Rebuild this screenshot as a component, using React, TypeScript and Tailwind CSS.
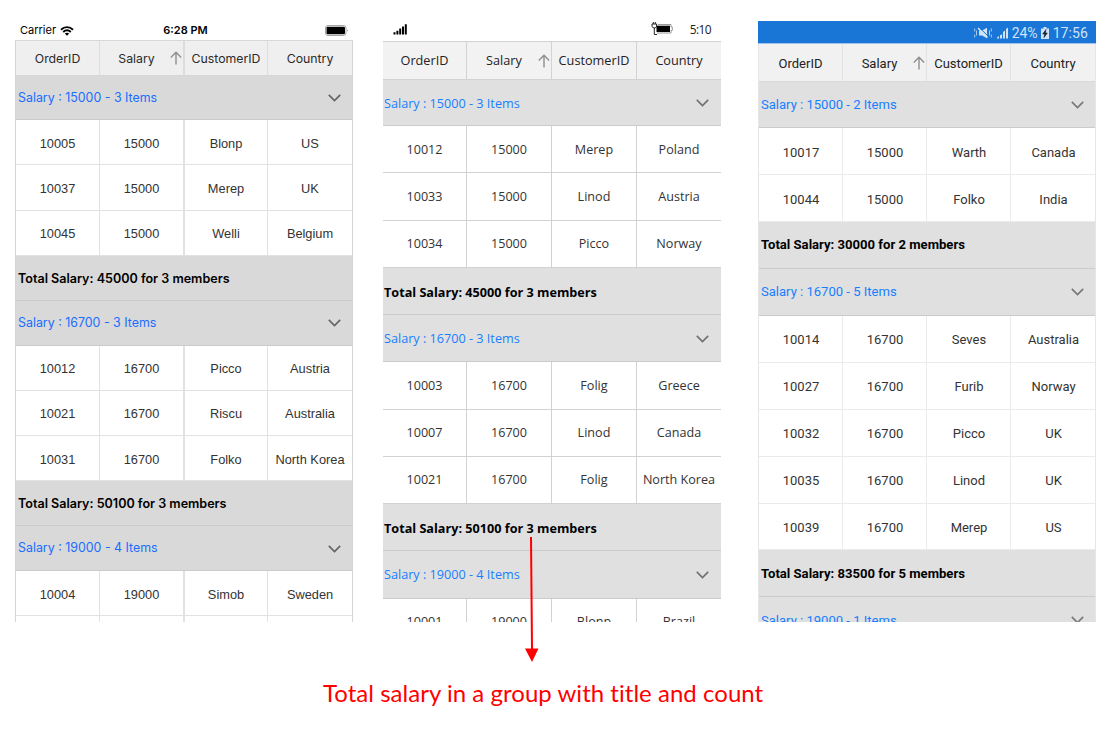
type Row =
  | { kind: 'group'; text: string }
  | { kind: 'total'; text: string }
  | { kind: 'data'; cells: string[] };

const group = (salary: number, count: number): Row => ({ kind: 'group', text: `Salary : ${salary} - ${count} Items` });
const total = (sum: number, count: number): Row => ({ kind: 'total', text: `Total Salary: ${sum} for ${count} members` });
const data = (...cells: string[]): Row => ({ kind: 'data', cells });

type Theme = {
  grid: string;
  cols: string;
  header: string;
  headerLine: string;
  group: string;
  firstRow: string;
  total: string;
  row: string;
  cell: string;
  line: string;
  wideLine: number[];
  chevron: string;
};

const ios: Theme = {
  grid: 'border-x border-[#d5d5d5]',
  cols: 'grid-cols-[84px_85px_83px_84px]',
  header: 'h-[36px] bg-[#efefef] border-y border-[#d8d8d8] font-[Inter,sans-serif] text-[12.3px] text-[#2b2b2b] *:pt-[2px]',
  headerLine: 'border-[#dcdcdc]',
  group: 'bg-[#d9d9d9] font-[Inter,sans-serif] text-[12.4px] text-[#1a6dff] pl-[2px] pr-[11px] pt-[1px]',
  firstRow: 'h-[44.4px]',
  total: 'bg-[#d9d9d9] font-[Inter,sans-serif] text-[12.55px] font-semibold text-black pl-[2px] pt-[3px]',
  row: 'h-[45.1px]',
  cell: "font-['Liberation_Sans',sans-serif] text-[12.8px] *:pt-[2px]",
  line: 'border-[#e2e2e2]',
  wideLine: [1],
  chevron: '#636363',
};

const windows: Theme = {
  grid: '',
  cols: 'grid-cols-[84px_85px_85px_84px]',
  header: "h-[39px] bg-[#f2f2f2] border-y border-[#d2d2d2] font-['Open_Sans',sans-serif] text-[12.7px] text-[#222] *:pt-[1px]",
  headerLine: 'border-[#d2d2d2]',
  group: "bg-[#e0e0e0] font-['Open_Sans',sans-serif] text-[12.65px] text-[#177fff] pl-[1px] pr-[12px] pt-[1px]",
  firstRow: 'h-[46px]',
  total: "bg-[#e0e0e0] font-['Open_Sans',sans-serif] text-[12.65px] font-bold text-black pl-[1px] pt-[3px]",
  row: 'h-[47.25px]',
  cell: "font-['Open_Sans',sans-serif] text-[12.6px] *:pt-[2px]",
  line: 'border-[#d2d2d2]',
  wideLine: [],
  chevron: '#707070',
};

const android: Theme = {
  grid: 'border-x border-[#e6e6e6]',
  cols: 'grid-cols-[84px_84px_84px_84px]',
  header: 'h-[38px] bg-[#f1f1f1] border-b border-[#d9d9d9] font-[Roboto,sans-serif] text-[13px] text-[#222] *:pt-[3px]',
  headerLine: 'border-[#e2e2e2]',
  group: 'bg-[#e0e0e0] font-[Roboto,sans-serif] text-[13.05px] text-[#177fff] pl-[2px] pr-[11px]',
  firstRow: 'h-[46px]',
  total: 'bg-[#e0e0e0] font-[Roboto,sans-serif] text-[13.1px] font-bold text-black pl-[2px]',
  row: 'h-[46.95px]',
  cell: 'font-[Roboto,sans-serif] text-[13px] *:pt-[3px] *:pl-[1px]',
  line: 'border-[#ebebeb]',
  wideLine: [],
  chevron: '#777777',
};

function Chevron({ color }: { color: string }) {
  return (
    <svg width="13" height="8" viewBox="0 0 13 8" fill="none" stroke={color} strokeWidth="1.6">
      <path d="M0.8 0.9 6.5 6.6 12.2 0.9" />
    </svg>
  );
}

function SortArrow() {
  return (
    <svg width="12" height="14" viewBox="0 0 12 14" fill="none" stroke="#8f8f8f" strokeWidth="1.4">
      <path d="M6 13.5V1.2M0.8 6.4 6 1.2 11.2 6.4" />
    </svg>
  );
}

function Grid({ theme, rows }: { theme: Theme; rows: Row[] }) {
  const columns = ['OrderID', 'Salary', 'CustomerID', 'Country'];
  const divider = (i: number) => (i === 3 ? '' : theme.wideLine.includes(i) ? 'border-r-2' : 'border-r');
  return (
    <div className={`min-h-0 flex-1 overflow-hidden ${theme.grid}`}>
      <div className={`grid ${theme.cols} ${theme.header}`}>
        {columns.map((c, i) => (
          <div key={c} className={`relative flex items-center justify-center whitespace-nowrap ${divider(i)} ${theme.headerLine}`}>
            <span className={i === 1 ? 'pr-[10px]' : ''}>{c}</span>
            {i === 1 && (
              <span className="absolute right-[1.5px] top-1/2 -translate-y-1/2">
                <SortArrow />
              </span>
            )}
          </div>
        ))}
      </div>
      {rows.map((r, i) => {
        const height = i === 0 ? theme.firstRow : theme.row;
        if (r.kind === 'group')
          return (
            <div key={i} className={`flex items-center justify-between border-b border-[#cbcbcb] ${theme.group} ${height}`}>
              <span>{r.text}</span>
              <Chevron color={theme.chevron} />
            </div>
          );
        if (r.kind === 'total')
          return (
            <div key={i} className={`flex items-center border-b border-[#cbcbcb] ${theme.total} ${height}`}>
              {r.text}
            </div>
          );
        return (
          <div key={i} className={`grid border-b bg-white text-[#333] ${theme.cols} ${theme.line} ${theme.cell} ${height}`}>
            {r.cells.map((c, j) => (
              <div key={j} className={`flex items-center justify-center whitespace-nowrap ${divider(j)} ${theme.line}`}>
                {c}
              </div>
            ))}
          </div>
        );
      })}
    </div>
  );
}

function IosStatus() {
  return (
    <div className="grid h-[19px] grid-cols-3 items-center pl-[5px] pr-[4px] font-[Inter,sans-serif] text-[11px] text-black">
      <div className="flex items-center gap-[4px]">
        <span>Carrier</span>
        <svg width="14" height="10" viewBox="0 0 14 10" fill="none" stroke="black" strokeWidth="1.9">
          <path d="M1 3.700C4.500 0.300 9.500 0.300 13 3.700M3.200 6C5.500 4 8.500 4 10.800 6" />
          <path d="M7 9.700 4.800 7.500Q7 5.900 9.200 7.500Z" fill="black" stroke="none" />
        </svg>
      </div>
      <span className="pl-[2px] text-center font-semibold">6:28 PM</span>
      <svg className="ml-auto" width="24" height="11" viewBox="0 0 24 11">
        <rect x="0.5" y="0.5" width="20.5" height="10" rx="2.5" fill="none" stroke="#a5a5a5" />
        <rect x="1.500" y="1.700" width="18.500" height="7.600" rx="1.200" fill="black" />
        <path d="M22.2 4Q23.500 5.5 22.2 7Z" fill="#888" />
      </svg>
    </div>
  );
}

function WindowsStatus() {
  return (
    <div className="flex h-[20px] items-center pb-[4px] pl-[10px] pr-[10px] font-['Open_Sans',sans-serif] text-[12px] tracking-[-0.6px] text-[#222]">
      <svg width="15" height="12" viewBox="0 0 15 12" fill="black">
        <path d="M0.5 9.300h2V11.500h-2zM3.400 7.700h2v3.800h-2zM6.200 5.600h2v5.900h-2zM9 3.500h2v8H9zM11.800 1.200h2v10.300h-2z" />
      </svg>
      <svg className="ml-auto" width="23" height="14" viewBox="0 0 23 14">
        <path d="M2.300 0v2M4.300 0v2M3.300 6v6.500H6" fill="none" stroke="#222" />
        <path d="M1 2h4.600v2.300Q5.200 6 3.300 6T1 4.300z" fill="#fff" stroke="#222" />
        <path d="M7 2.500h13v2.500h1.300v3.500H20V11H6" fill="none" stroke="#999" />
        <rect x="5.500" y="3.700" width="13.500" height="6.300" fill="black" />
      </svg>
      <span className="ml-[16px] pt-[2px]">5:10</span>
    </div>
  );
}

function AndroidStatus() {
  return (
    <div className="flex h-[23px] items-center justify-end border-b border-[#9cc4ee] bg-[#1976d6] pr-[8px] pt-[2px] font-[Roboto,sans-serif] text-[14px] text-[#cfe2f7]">
      <svg width="18" height="12" viewBox="0 0 18 12" fill="none" stroke="#cfe2f7">
        <path d="M5 3.500h3L13 0.800v10.400L8 8.500H5z" fill="#cfe2f7" stroke="none" />
        <path d="M5 0.200 14.500 9.700" stroke="#1976d6" strokeWidth="1" />
        <path d="M4 1 13.500 10.500" strokeWidth="1.500" />
        <path d="M2.500 3.500v5M0.700 1.500v3M0.700 7.500v3M15.500 3.500v5M17.300 1.500v3M17.300 7.500v3" strokeWidth="0.8" />
      </svg>
      <svg className="ml-[5px]" width="12" height="12" viewBox="0 0 12 12" fill="#cfe2f7">
        <path d="M0 11.500V10.500L2 9v2.500zM3 11.500V8.500L5 7v4.500zM6 11.500V5L8 3.500v8zM9 11.500V2L11 0.500v11z" />
      </svg>
      <span className="ml-[3px]">24%</span>
      <svg className="ml-[3px]" width="8" height="12" viewBox="0 0 8 12">
        <path d="M2.500 0h3v1.500H8V12H0V1.500h2.500z" fill="#cfe2f7" />
        <path d="M5 2.500 1.700 7h2L3 10.500 6.300 6h-2z" fill="#123" stroke="#123" strokeWidth="0.600" />
      </svg>
      <span className="ml-[4px] tracking-[0.1px]">17:56</span>
    </div>
  );
}

const iosRows: Row[] = [
  group(15000, 3),
  data('10005', '15000', 'Blonp', 'US'),
  data('10037', '15000', 'Merep', 'UK'),
  data('10045', '15000', 'Welli', 'Belgium'),
  total(45000, 3),
  group(16700, 3),
  data('10012', '16700', 'Picco', 'Austria'),
  data('10021', '16700', 'Riscu', 'Australia'),
  data('10031', '16700', 'Folko', 'North Korea'),
  total(50100, 3),
  group(19000, 4),
  data('10004', '19000', 'Simob', 'Sweden'),
  data('', '', '', ''),
];

const windowsRows: Row[] = [
  group(15000, 3),
  data('10012', '15000', 'Merep', 'Poland'),
  data('10033', '15000', 'Linod', 'Austria'),
  data('10034', '15000', 'Picco', 'Norway'),
  total(45000, 3),
  group(16700, 3),
  data('10003', '16700', 'Folig', 'Greece'),
  data('10007', '16700', 'Linod', 'Canada'),
  data('10021', '16700', 'Folig', 'North Korea'),
  total(50100, 3),
  group(19000, 4),
  data('10001', '19000', 'Blonp', 'Brazil'),
];

const androidRows: Row[] = [
  group(15000, 2),
  data('10017', '15000', 'Warth', 'Canada'),
  data('10044', '15000', 'Folko', 'India'),
  total(30000, 2),
  group(16700, 5),
  data('10014', '16700', 'Seves', 'Australia'),
  data('10027', '16700', 'Furib', 'Norway'),
  data('10032', '16700', 'Picco', 'UK'),
  data('10035', '16700', 'Linod', 'UK'),
  data('10039', '16700', 'Merep', 'US'),
  total(83500, 5),
  group(19000, 1),
];

export default function App() {
  return (
    <div className="h-[734px] w-[1114px] overflow-hidden bg-white">
      <div className="relative flex h-[622px] pl-[15px] pt-[21px]">
        <div className="flex w-[338px] flex-col">
          <IosStatus />
          <Grid theme={ios} rows={iosRows} />
        </div>
        <div className="ml-[30px] flex w-[338px] flex-col">
          <WindowsStatus />
          <Grid theme={windows} rows={windowsRows} />
        </div>
        <div className="ml-[37px] flex w-[338px] flex-col">
          <AndroidStatus />
          <Grid theme={android} rows={androidRows} />
        </div>
        <svg className="absolute left-[524px] top-[536px]" width="16" height="127" viewBox="0 0 16 127">
          <path d="M7 1 8 113" stroke="#ff0000" strokeWidth="2" />
          <path d="M1 112.500H14.500L8 126z" fill="#ff0000" />
        </svg>
      </div>
      <p className="pl-[323px] pt-[54px] font-[Lato,sans-serif] text-[24px] leading-[34px] tracking-[0.03px] text-[#ff0000] [font-variant-ligatures:none]">
        Total salary in a group with title and count
      </p>
    </div>
  );
}
